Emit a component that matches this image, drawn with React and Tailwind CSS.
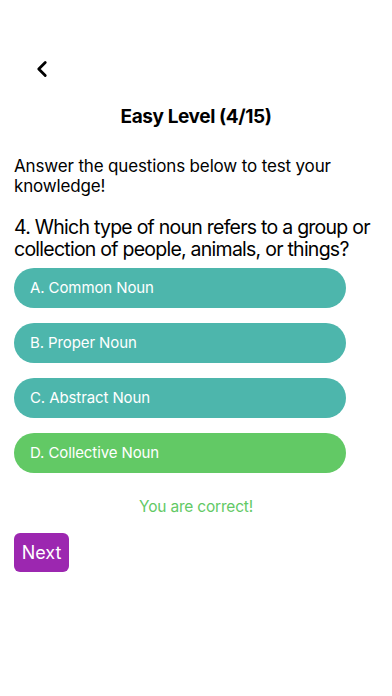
import { ChevronLeft } from "lucide-react";

const options = [
    { label: "A. Common Noun", correct: false },
    { label: "B. Proper Noun", correct: false },
    { label: "C. Abstract Noun", correct: false },
    { label: "D. Collective Noun", correct: true },
];

export default function App() {
    return (
        <div className="min-h-[696px] w-[392px] bg-white text-black font-['Inter',sans-serif] px-[14px]">
            <div className="pt-[56px] pl-[15px] h-[84px]">
                <ChevronLeft size={26} strokeWidth={2.6} />
            </div>

            <h1 className="mt-[20px] text-center text-[19px] font-bold leading-[26px] tracking-[-0.4px]">
                Easy Level (4/15)
            </h1>

            <p className="mt-[26px] text-[17px] leading-[20px] pr-[20px] tracking-[-0.15px]">
                Answer the questions below to test your knowledge!
            </p>

            <p className="mt-[20px] text-[19.5px] leading-[22px] tracking-[-0.75px]">
                4. Which type of noun refers to a group or collection of people, animals, or things?
            </p>

            <div className="mt-[8px] flex flex-col gap-[15px] w-[332px]">
                {options.map((o) => (
                    <button
                        key={o.label}
                        className={`h-[40px] rounded-full text-left pl-[16px] text-white text-[15px] tracking-[-0.1px] ${
                            o.correct ? "bg-[#62c965]" : "bg-[#4db6ac]"
                        }`}
                    >
                        {o.label}
                    </button>
                ))}
            </div>

            <p className="mt-[22px] text-center text-[15.5px] text-[#62c965] tracking-[-0.2px]">
                You are correct!
            </p>

            <button className="mt-[15px] w-[55px] h-[39px] rounded-[6px] bg-[#9c27b0] text-white text-[18px]">
                Next
            </button>
        </div>
    );
}
